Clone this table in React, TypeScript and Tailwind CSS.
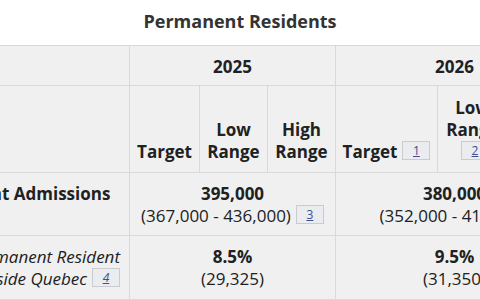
import type { ReactNode } from 'react'

function Ref({ n }: { n: number }) {
  return (
    <span className="ml-[5px] inline-block h-[19px] w-[28px] border border-[#c8ccd1] bg-[#eaecf0] text-center align-[3px] text-[12px] leading-[17px] font-normal text-[#3a4f8c] underline">
      {n}
    </span>
  )
}

function Cell({ children, span = 1 }: { children: ReactNode; span?: number }) {
  return (
    <td colSpan={span} className="border border-[#d9d9d9] px-2 pt-[10px] pb-[8px] text-center align-top">
      {children}
    </td>
  )
}

export default function App() {
  return (
    <div className="h-[300px] w-[480px] overflow-hidden bg-white font-['Open_Sans',sans-serif] text-[#202122]">
      <div className="pt-[8px] pb-[11px] text-center text-[18px] leading-[26px] font-bold text-[#333]">
        Permanent Residents
      </div>
      <table className="ml-[-153px] w-[726px] table-fixed border-collapse bg-[#f0f0f0] text-[17px] leading-[22px]">
        <colgroup>
          <col className="w-[282px]" />
          <col className="w-[70px]" />
          <col className="w-[68px]" />
          <col className="w-[68px]" />
          <col className="w-[102px]" />
          <col className="w-[70px]" />
          <col className="w-[66px]" />
        </colgroup>
        <thead>
          <tr className="h-[40px]">
            <th className="border border-[#d9d9d9]" />
            <th colSpan={3} className="border border-[#d9d9d9] pt-[2px] text-center font-bold">
              2025
            </th>
            <th colSpan={3} className="border border-[#d9d9d9] pt-[2px] text-center font-bold">
              2026
            </th>
          </tr>
          <tr className="h-[87px]">
            <th className="border border-[#d9d9d9]" />
            <th className="border border-[#d9d9d9] px-1 pb-[9px] text-center align-bottom font-bold">Target</th>
            <th className="border border-[#d9d9d9] px-1 pb-[9px] text-center align-bottom font-bold">
              Low
              <br />
              Range
            </th>
            <th className="border border-[#d9d9d9] px-1 pb-[9px] text-center align-bottom font-bold">
              High
              <br />
              Range
            </th>
            <th className="border border-[#d9d9d9] px-1 pb-[9px] text-center align-bottom font-bold whitespace-nowrap">
              Target
              <Ref n={1} />
            </th>
            <th className="border border-[#d9d9d9] px-1 pb-[9px] text-center align-bottom font-bold">
              Low
              <br />
              Range
              <br />
              <Ref n={2} />
            </th>
            <th className="border border-[#d9d9d9] px-1 pb-[9px] text-center align-bottom font-bold">
              High
              <br />
              Range
            </th>
          </tr>
        </thead>
        <tbody>
          <tr>
            <th className="border border-[#d9d9d9] px-2 pt-[10px] pb-[8px] text-center align-top font-bold">
              Total Permanent Admissions
            </th>
            <Cell span={3}>
              <b>395,000</b>
              <br />
              <span className="whitespace-nowrap">
                (367,000 - 436,000)
                <Ref n={3} />
              </span>
            </Cell>
            <Cell span={3}>
              <b>380,000</b>
              <br />
              <span className="whitespace-nowrap">(352,000 - 416,000)</span>
            </Cell>
          </tr>
          <tr>
            <th className="border border-[#d9d9d9] pt-[10px] pr-[9px] pb-[9px] pl-2 text-right align-top font-normal italic whitespace-nowrap">
              Francophone Permanent Resident
              <br />
              Admissions Outside Quebec
              <Ref n={4} />
            </th>
            <Cell span={3}>
              <b>8.5%</b>
              <br />
              (29,325)
            </Cell>
            <Cell span={3}>
              <b>9.5%</b>
              <br />
              (31,350)
            </Cell>
          </tr>
          <tr>
            <th className="border border-[#d9d9d9] px-2 pt-[10px] pb-[8px] text-center align-top font-bold">
              Economic
            </th>
            <Cell span={3}>
              <b>232,150</b>
            </Cell>
            <Cell span={3}>
              <b>229,750</b>
            </Cell>
          </tr>
        </tbody>
      </table>
    </div>
  )
}
